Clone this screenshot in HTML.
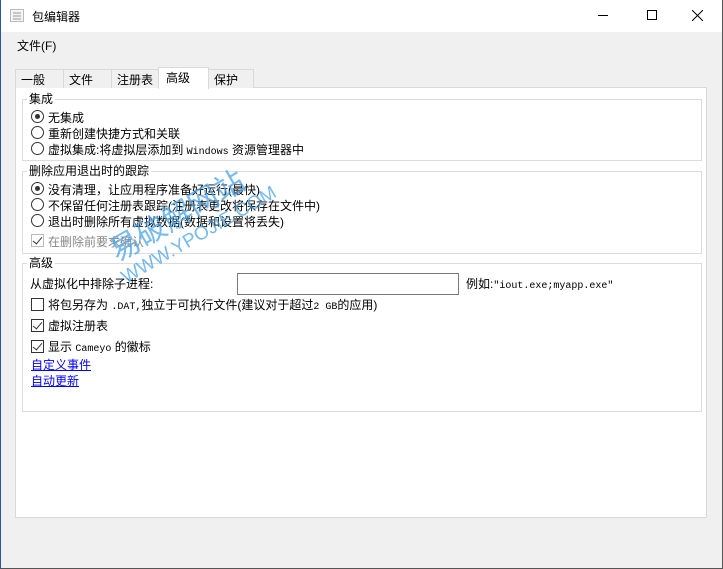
<!DOCTYPE html>
<html><head><meta charset="utf-8"><style>
*{box-sizing:border-box;margin:0;padding:0}
body{width:723px;height:569px;overflow:hidden;background:#f0f0f0;font-family:"Liberation Sans","Noto Sans CJK SC",sans-serif;font-size:12px;color:#000;position:relative}
.win{position:absolute;left:0;top:0;width:723px;height:569px;border:1px solid #2b5797;border-top:none;border-right:1px solid #555;border-bottom:1px solid #555}
.title{position:absolute;left:0;top:0;width:723px;height:32px;background:#fff}
.a{position:absolute;white-space:nowrap}
.m{font-family:"Liberation Mono",monospace;font-size:10px}
.tab{position:absolute;top:69px;height:19px;border:1px solid #d9d9d9;border-bottom:none;background:#f0f0f0;padding:1px 0 0 5px;font-size:12px}
.panel{position:absolute;left:15px;top:87px;width:692px;height:431px;background:#fff;border:1px solid #d9d9d9}
.grp{position:absolute;left:22px;width:680px;border:1px solid #dcdcdc}
.gl{position:absolute;background:#fff;padding:0 2px;line-height:14px}
.rad{position:absolute;width:13px;height:13px;border:1px solid #333;border-radius:50%;background:#fff}
.rad.on::after{content:"";position:absolute;left:3px;top:3px;width:5px;height:5px;border-radius:50%;background:#333}
.chk{position:absolute;width:13px;height:13px;border:1px solid #333;background:#fff}
.chk.on::after{content:"";position:absolute;left:3px;top:0px;width:4px;height:8px;border:solid #333;border-width:0 1.5px 1.5px 0;transform:rotate(40deg)}
.lnk{color:#0000ff;text-decoration:underline}
</style></head><body>
<div class="title"></div>
<svg class="a" style="left:10px;top:9px" width="14" height="13"><rect x="0.5" y="0.5" width="13" height="12" fill="#f4f4f4" stroke="#bbb"/><path d="M3 4h8M3 7h8M3 10h8" stroke="#999"/></svg>
<div class="a" style="left:32px;top:8px;font-size:12px">包编辑器</div>
<div class="a" style="left:598px;top:15px;width:10px;height:1px;background:#000"></div>
<div class="a" style="left:647px;top:10px;width:10px;height:10px;border:1px solid #000"></div>
<svg class="a" style="left:692px;top:10px" width="11" height="11"><path d="M0 0L11 11M11 0L0 11" stroke="#000"/></svg>
<div class="a" style="left:17px;top:37px">文件(F)</div>
<div class="panel"></div>
<div class="tab" style="left:15px;width:49px">一般</div>
<div class="tab" style="left:63px;width:49px">文件</div>
<div class="tab" style="left:111px;width:49px">注册表</div>
<div class="tab" style="left:208px;width:46px">保护</div>
<div class="tab" style="left:158px;top:67px;width:51px;height:22px;background:#fff;padding-left:7px">高级</div>
<div class="grp" style="top:99px;height:62px"></div>
<div class="gl" style="left:27px;top:92px">集成</div>
<div class="rad on" style="left:31px;top:110px"></div><div class="a" style="left:48px;top:109px">无集成</div>
<div class="rad" style="left:31px;top:126px"></div><div class="a" style="left:48px;top:125px">重新创建快捷方式和关联</div>
<div class="rad" style="left:31px;top:142px"></div><div class="a" style="left:48px;top:141px">虚拟集成:将虚拟层添加到 <span class="m">Windows</span> 资源管理器中</div>
<div class="grp" style="top:171px;height:83px"></div>
<div class="gl" style="left:27px;top:164px">删除应用退出时的跟踪</div>
<div class="rad on" style="left:31px;top:182px"></div><div class="a" style="left:48px;top:181px">没有清理，让应用程序准备好运行(最快)</div>
<div class="rad" style="left:31px;top:198px"></div><div class="a" style="left:48px;top:197px">不保留任何注册表跟踪(注册表更改将保存在文件中)</div>
<div class="rad" style="left:31px;top:214px"></div><div class="a" style="left:48px;top:213px">退出时删除所有虚拟数据(数据和设置将丢失)</div>
<div class="chk on" style="left:31px;top:234px;border-color:#bbb"></div><div class="a" style="left:48px;top:233px;color:#888">在删除前要求确认</div>
<div class="grp" style="top:263px;height:149px"></div>
<div class="gl" style="left:27px;top:256px">高级</div>
<div class="a" style="left:30px;top:275px">从虚拟化中排除子进程:</div>
<div class="a" style="left:237px;top:273px;width:222px;height:22px;border:1px solid #7a7a7a;background:#fff"></div>
<div class="a" style="left:466px;top:275px">例如:<span class="m">"iout.exe;myapp.exe"</span></div>
<div class="chk" style="left:31px;top:298px"></div><div class="a" style="left:48px;top:296px">将包另存为 <span class="m">.DAT,</span>独立于可执行文件(建议对于超过<span class="m">2 GB</span>的应用)</div>
<div class="chk on" style="left:31px;top:319px"></div><div class="a" style="left:48px;top:317px">虚拟注册表</div>
<div class="chk on" style="left:31px;top:340px"></div><div class="a" style="left:48px;top:338px">显示 <span class="m">Cameyo</span> 的徽标</div>
<div class="a lnk" style="left:31px;top:356px">自定义事件</div>
<div class="a lnk" style="left:31px;top:372px">自动更新</div>
<div class="a" style="left:100px;top:232px;color:#4aa3e8;opacity:.75;font-size:30px;transform:rotate(-30deg);transform-origin:left top">易破解网站</div>
<div class="a" style="left:118px;top:270px;color:#4aa3e8;opacity:.75;font-size:19px;transform:rotate(-30deg);transform-origin:left top">WWW.YPOJIE.COM</div>
<div class="win"></div>
</body></html>
